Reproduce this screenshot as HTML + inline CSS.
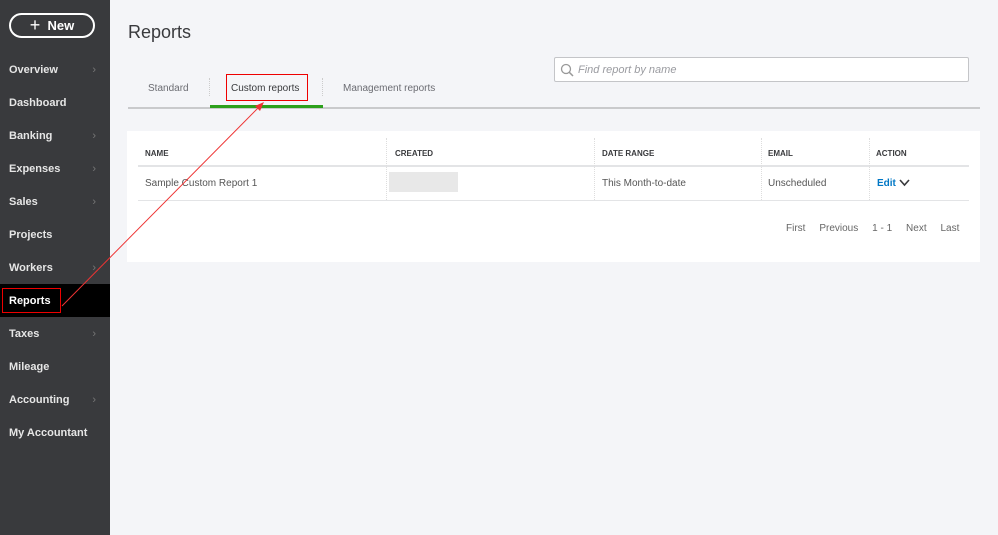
<!DOCTYPE html><html><head><style>
body{margin:0;width:998px;height:535px;background:#f4f5f8;font-family:"Liberation Sans",sans-serif;position:relative;overflow:hidden}
.sb{position:absolute;left:0;top:0;width:110px;height:535px;background:#393a3d}
.new{position:absolute;left:9px;top:13px;width:82px;height:21px;border:2px solid #fff;border-radius:13px;color:#fff;font-weight:bold;font-size:13px;line-height:21px;text-align:center}
.it{position:absolute;left:0;width:110px;height:33px;color:#e6e6e6;font-size:11px;font-weight:bold;line-height:35px;padding-left:9px;box-sizing:border-box}
.it i{position:absolute;right:14px;font-style:normal;color:#777;font-weight:normal}
.sel{background:#000;color:#fff}
.a{position:absolute}
.h{top:149px;font-size:8px;font-weight:bold;color:#393a3d}
</style></head><body>
<div class="sb">
<div class="new"><span style="font-weight:normal;font-size:18px;vertical-align:-1px">+</span>&nbsp; New</div>
<div class="it" style="top:53px">Overview<i>›</i></div>
<div class="it" style="top:86px">Dashboard</div>
<div class="it" style="top:119px">Banking<i>›</i></div>
<div class="it" style="top:152px">Expenses<i>›</i></div>
<div class="it" style="top:185px">Sales<i>›</i></div>
<div class="it" style="top:218px">Projects</div>
<div class="it" style="top:251px">Workers<i>›</i></div>
<div class="it sel" style="top:284px">Reports</div>
<div class="it" style="top:317px">Taxes<i>›</i></div>
<div class="it" style="top:350px">Mileage</div>
<div class="it" style="top:383px">Accounting<i>›</i></div>
<div class="it" style="top:416px">My Accountant</div>
</div>
<div class="a" style="left:2px;top:288px;width:57px;height:23px;border:1px solid #e00"></div>
<div class="a" style="left:128px;top:22px;font-size:18px;color:#393a3d">Reports</div>
<div class="a" style="left:148px;top:83px;font-size:10px;color:#6b6c72">Standard</div>
<div class="a" style="left:209px;top:78px;height:18px;border-left:1px dotted #ccc"></div>
<div class="a" style="left:231px;top:83px;font-size:10px;color:#393a3d">Custom reports</div>
<div class="a" style="left:226px;top:74px;width:80px;height:25px;border:1px solid #e00"></div>
<div class="a" style="left:322px;top:78px;height:18px;border-left:1px dotted #ccc"></div>
<div class="a" style="left:343px;top:83px;font-size:10px;color:#6b6c72">Management reports</div>
<div class="a" style="left:128px;top:107px;width:852px;height:2px;background:#c9cacc"></div>
<div class="a" style="left:210px;top:105px;width:113px;height:3px;background:#2ca01c"></div>
<div class="a" style="left:554px;top:57px;width:413px;height:23px;background:#fff;border:1px solid #c4c5c8;border-radius:2px"></div>
<svg class="a" style="left:560px;top:63px" width="14" height="14"><circle cx="6" cy="6" r="4.5" fill="none" stroke="#999" stroke-width="1.3"/><path d="M9.3 9.3L13 13" stroke="#999" stroke-width="1.5"/></svg>
<div class="a" style="left:578px;top:64px;font-size:11px;color:#9a9ba0;font-style:italic">Find report by name</div>
<div class="a" style="left:127px;top:131px;width:853px;height:131px;background:#fff"></div>
<div class="a" style="left:138px;top:165px;width:831px;height:2px;background:#e3e4e6"></div>
<div class="a" style="left:138px;top:200px;width:831px;height:1px;background:#e3e4e6"></div>
<div class="a" style="left:386px;top:138px;height:62px;border-left:1px dotted #ddd"></div>
<div class="a" style="left:594px;top:138px;height:62px;border-left:1px dotted #ddd"></div>
<div class="a" style="left:761px;top:138px;height:62px;border-left:1px dotted #ddd"></div>
<div class="a" style="left:869px;top:138px;height:62px;border-left:1px dotted #ddd"></div>
<div class="a h" style="left:145px">NAME</div>
<div class="a h" style="left:395px">CREATED</div>
<div class="a h" style="left:602px">DATE RANGE</div>
<div class="a h" style="left:768px">EMAIL</div>
<div class="a h" style="left:876px">ACTION</div>
<div class="a" style="top:178px;left:145px;font-size:10px;color:#555">Sample Custom Report 1</div>
<div class="a" style="top:172px;left:389px;width:69px;height:20px;background:#e8e8e8"></div>
<div class="a" style="top:178px;left:602px;font-size:10px;color:#555">This Month-to-date</div>
<div class="a" style="top:178px;left:768px;font-size:10px;color:#555">Unscheduled</div>
<div class="a" style="top:178px;left:877px;font-size:10px;color:#0077c5;font-weight:bold">Edit</div>
<svg class="a" style="left:899px;top:179px" width="11" height="8"><path d="M1 1L5.5 6L10 1" fill="none" stroke="#393a3d" stroke-width="1.6"/></svg>
<div class="a" style="top:223px;left:786px;font-size:10px;color:#666">First &nbsp;&nbsp;&nbsp; Previous &nbsp;&nbsp;&nbsp; 1 - 1 &nbsp;&nbsp;&nbsp; Next &nbsp;&nbsp;&nbsp; Last</div>
<svg class="a" style="left:0;top:0" width="998" height="535"><line x1="62" y1="306" x2="262" y2="104" stroke="#e33" stroke-width="1"/><path d="M264 102L255 106L260 111Z" fill="#e33"/></svg>
</body></html>
